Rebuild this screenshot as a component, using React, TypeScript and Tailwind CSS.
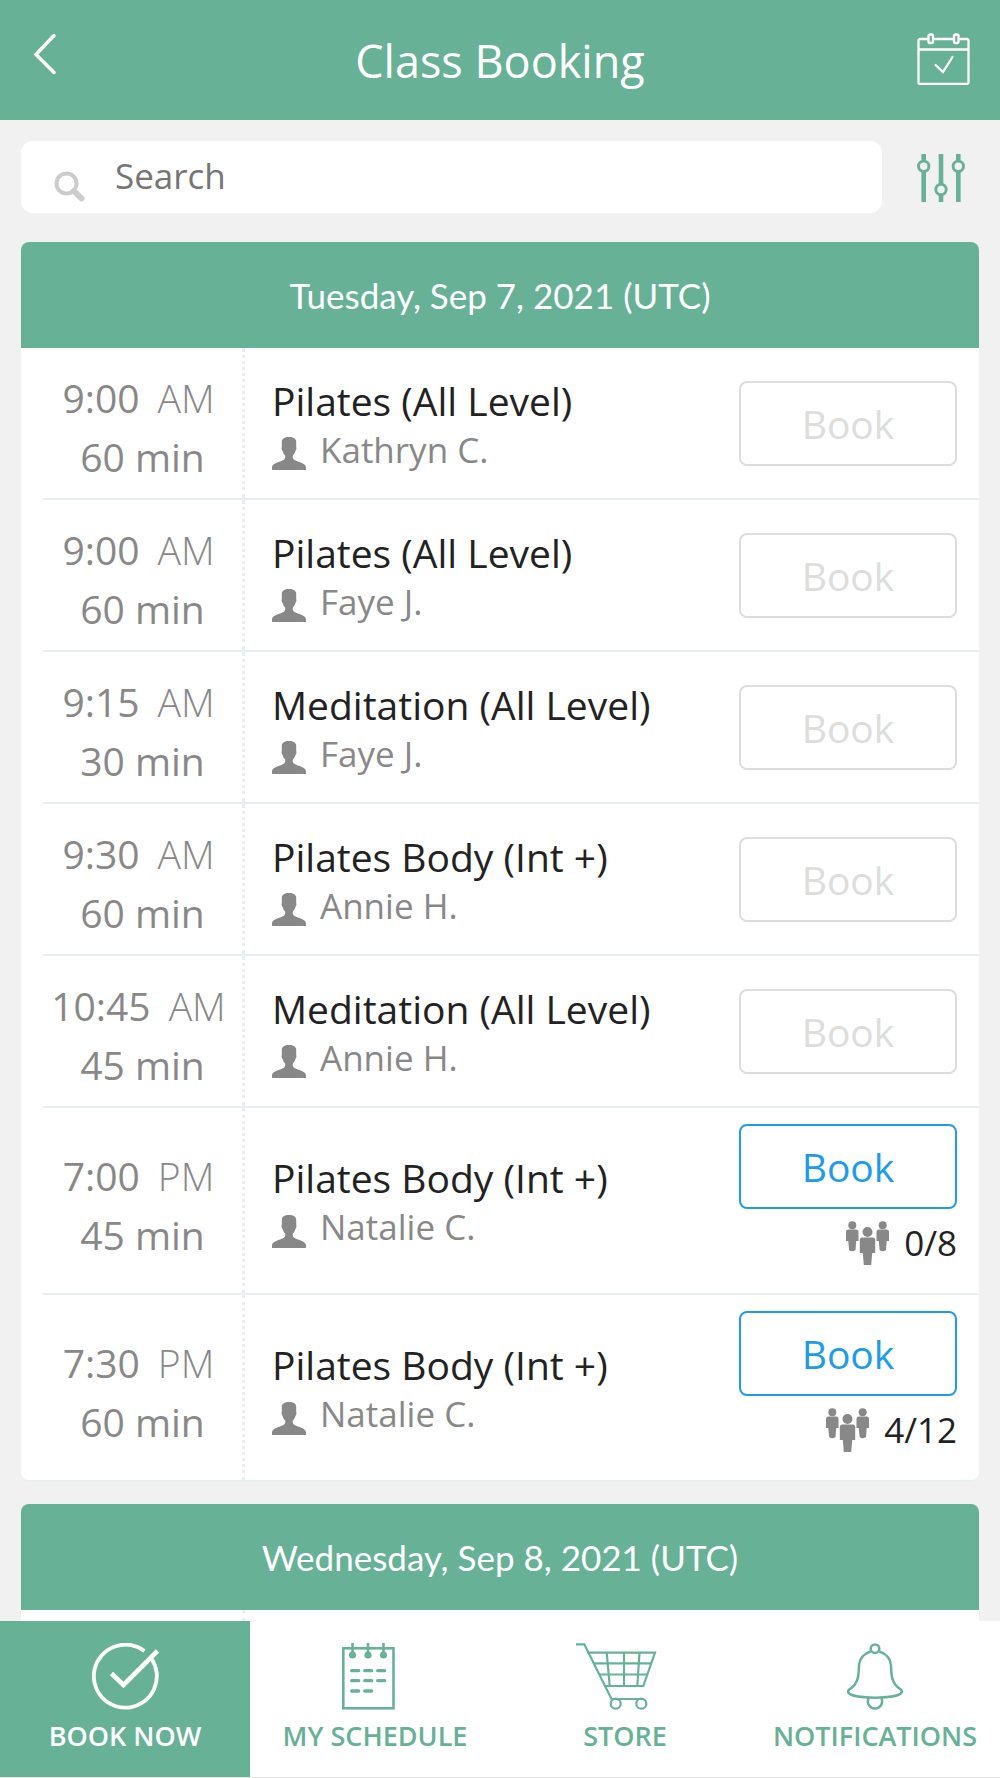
import clsx from "clsx";

type ClassItem = {
  time: string;
  period: string;
  duration: string;
  title: string;
  teacher: string;
  spots?: string;
};

const classes: ClassItem[] = [
  { time: "9:00", period: "AM", duration: "60 min", title: "Pilates (All Level)", teacher: "Kathryn C." },
  { time: "9:00", period: "AM", duration: "60 min", title: "Pilates (All Level)", teacher: "Faye J." },
  { time: "9:15", period: "AM", duration: "30 min", title: "Meditation (All Level)", teacher: "Faye J." },
  { time: "9:30", period: "AM", duration: "60 min", title: "Pilates Body (Int +)", teacher: "Annie H." },
  { time: "10:45", period: "AM", duration: "45 min", title: "Meditation (All Level)", teacher: "Annie H." },
  { time: "7:00", period: "PM", duration: "45 min", title: "Pilates Body (Int +)", teacher: "Natalie C.", spots: "0/8" },
  { time: "7:30", period: "PM", duration: "60 min", title: "Pilates Body (Int +)", teacher: "Natalie C.", spots: "4/12" },
];

const BackIcon = () => (
  <svg width="24" height="42" viewBox="0 0 24 42" fill="none" stroke="currentColor" strokeWidth="3.500" strokeLinecap="round">
    <path d="M21 2.500 3 21.500l18 18" strokeLinejoin="miter" />
  </svg>
);

const CalendarIcon = () => (
  <svg width="53" height="52" viewBox="0 0 53 52" fill="none" stroke="currentColor" strokeWidth="2.300">
    <path d="M11 6H3a1.500 1.500 0 0 0-1.500 1.500V49.500A1.500 1.500 0 0 0 3 51H50a1.500 1.500 0 0 0 1.500-1.500V7.500A1.500 1.500 0 0 0 50 6H42M36.500 6H16.500M1.500 16.500H51.500" />
    <rect x="11.500" y="1.500" width="4.500" height="8.500" rx="1.500" />
    <rect x="37" y="1.500" width="4.500" height="8.500" rx="1.500" />
    <path d="M18.500 32l7.500 7 9.500-15" strokeLinecap="round" />
  </svg>
);

const SearchIcon = () => (
  <svg width="31" height="31" viewBox="0 0 31 31" fill="none" stroke="currentColor">
    <circle cx="12.500" cy="12.500" r="10" strokeWidth="4" />
    <path d="M20 20l7.500 7.500" strokeWidth="6" strokeLinecap="round" />
  </svg>
);

const FilterIcon = () => (
  <svg width="48" height="48" viewBox="0 0 48 48" fill="none" stroke="currentColor" strokeWidth="4.600">
    <path d="M6.700 0v7M6.700 18v30M24 0v30M24 41v7M41.300 0v7M41.300 18v30" />
    <g strokeWidth="2.900">
      <circle cx="6.700" cy="12.300" r="5.200" />
      <circle cx="24" cy="35.500" r="5.200" />
      <circle cx="41.300" cy="12.300" r="5.200" />
    </g>
  </svg>
);

const PersonIcon = () => (
  <svg width="34" height="33" viewBox="0 0 34 33" fill="currentColor">
    <path d="M17 0C12.500 0 9.800 1.800 9.800 5v5c-.6 1.200-.2 3 .8 4 .6 2.200 1.500 3.600 2.700 4.700v1.800c-.6 2.200-2.500 3-5.300 4C3.500 26.200 0 27.300 0 30.500V33H34V30.500C34 27.300 30.500 26.200 26 24.500c-2.800-1-4.700-1.800-5.300-4v-1.800c1.200-1.100 2.100-2.500 2.700-4.700 1-1 1.400-2.800.8-4V5C24.200 1.800 21.500 0 17 0Z" />
  </svg>
);

const GroupIcon = () => (
  <svg width="43" height="44" viewBox="0 0 43 44" fill="currentColor">
    <circle cx="6.300" cy="4.300" r="4" />
    <path d="M0 11q0-2.500 2.500-2.500h7.500q2.500 0 2.500 2.500v9h-2.300l-.7 9q-3.200 2.500-6.400 0l-.8-9H0Z" />
    <circle cx="36.700" cy="4.300" r="4" />
    <path d="M30.500 11q0-2.500 2.500-2.500h7.500q2.500 0 2.500 2.500v9h-2.300l-.7 9q-3.200 2.500-6.400 0l-.8-9h-2.300Z" />
    <circle cx="21.500" cy="11" r="5" />
    <path d="M13.800 19q0-2.500 2.500-2.500h10.400q2.500 0 2.500 2.500v13h-3l-1 12h-7.400l-1-12h-3Z" />
  </svg>
);

const CheckCircleIcon = () => (
  <svg width="67" height="67" viewBox="0 0 67 67" fill="none" stroke="currentColor" strokeWidth="3.800">
    <path d="M52.400 8.100A31.500 31.500 0 1 0 60 16.400" />
    <path d="M19.500 30.500l12 11.500L65.500 8" strokeWidth="4.600" />
  </svg>
);

const ScheduleIcon = () => (
  <svg width="67" height="67" viewBox="0 0 67 67" fill="none" stroke="currentColor" strokeWidth="2.600">
    <rect x="1.300" y="5.300" width="50.200" height="60" />
    <path d="M10.500 0v12M26 0v12M41.500 0v12" />
    <g fill="currentColor" stroke="none">
      <circle cx="10.500" cy="12" r="3.600" />
      <circle cx="26" cy="12" r="3.600" />
      <circle cx="41.500" cy="12" r="3.600" />
    </g>
    <path
      d="M9.700 27.700h7M22.700 27.700h7M35.700 27.700h7M9.700 37.700h7M22.700 37.700h7M35.700 37.700h7M9.700 48h7M22.700 48h7"
      strokeWidth="3.300"
      strokeLinecap="round"
    />
  </svg>
);

const CartIcon = () => (
  <svg width="98" height="67" viewBox="0 0 98 67" fill="none" stroke="currentColor" strokeWidth="2.200">
    <path d="M0 1.300h8.300L35.500 56H66" />
    <path d="M11.500 9.700H79L67.300 43H29.500M18 20.300h57.500M24 31.500h47.500M30.700 9.700L33.700 43M48 9.700V43M63.500 9.700L61.300 43" />
    <circle cx="39.700" cy="60.700" r="5" />
    <circle cx="65.300" cy="60.700" r="5" />
  </svg>
);

const BellIcon = () => (
  <svg width="56" height="67" viewBox="0 0 56 67" fill="none" stroke="currentColor" strokeWidth="2.500">
    <circle cx="28" cy="5.700" r="4.300" />
    <path d="M23.700 8.500C16.500 10.500 12.300 16 12 22.500C11.700 31 11.700 40 3.500 45.500C1.500 46.800.7 48.200 1.500 49.700C3.500 53.300 17 54.700 28 54.700S52.500 53.300 54.500 49.700C55.300 48.200 54.500 46.800 52.500 45.500C44.300 40 44.300 31 44 22.500C43.700 16 39.500 10.500 32.300 8.500" />
    <path d="M21.500 54.700C19.500 60 22.500 65.500 28 65.500S36.500 60 34.500 54.700" />
  </svg>
);

const DayHeader = ({ children }: { children: string }) => (
  <h2 className="flex h-[106px] shrink-0 items-center justify-center rounded-t-lg bg-[#67b197] font-['Lato',sans-serif] text-[35px] text-white">
    {children}
  </h2>
);

const ClassRow = ({ item }: { item: ClassItem }) => (
  <li className="flex min-h-[152px] border-b-2 border-[#e9eff1] last:border-b-0">
    <div className="flex w-[199px] shrink-0 flex-col justify-center pt-2 text-center text-[39px] leading-[59px] text-[#888]">
      <div className="flex justify-center gap-[18px] pr-2">
        <span>{item.time}</span>
        <span className="font-light">{item.period}</span>
      </div>
      <div>{item.duration}</div>
    </div>
    <div className="flex min-w-0 flex-1 flex-col justify-center border-l-3 border-dotted border-[#e9eff1] pt-[2px] pl-[27px]">
      <h3 className="text-[39px] leading-[51px] text-[#222]">{item.title}</h3>
      <div className="flex items-center gap-[14px] text-[35px] leading-[48px] text-[#888]">
        <span className="pt-2">
          <PersonIcon />
        </span>
        {item.teacher}
      </div>
    </div>
    <div className={clsx("flex shrink-0 flex-col pr-[22px]", item.spots ? "pt-4 pb-[26px]" : "justify-center")}>
      <button
        type="button"
        disabled={!item.spots}
        className="h-[85px] w-[218px] rounded-lg border-2 border-[#1f9bea] pt-[2px] text-[39px] text-[#1f9bea] disabled:border-[#ddd] disabled:text-[#ddd]"
      >
        Book
      </button>
      {item.spots && (
        <div className="mt-[10px] flex items-center justify-end gap-[15px] text-[35px] leading-[48px] text-[#222]">
          <span className="text-[#888]">
            <GroupIcon />
          </span>
          {item.spots}
        </div>
      )}
    </div>
  </li>
);

const tabs = [
  { label: "BOOK NOW", icon: <CheckCircleIcon />, active: true },
  { label: "MY SCHEDULE", icon: <ScheduleIcon /> },
  { label: "STORE", icon: <CartIcon /> },
  { label: "NOTIFICATIONS", icon: <BellIcon /> },
];

export default function App() {
  return (
    <div className="flex h-screen flex-col bg-[#f1f1f1] font-['Open_Sans',sans-serif]">
      <header className="flex h-[120px] shrink-0 items-center justify-between bg-[#67b197] px-[30px] text-white">
        <button type="button" aria-label="Back" className="w-[53px] pb-3 pl-[3px]">
          <BackIcon />
        </button>
        <h1 className="pt-[2px] text-[45px]">Class Booking</h1>
        <button type="button" aria-label="My bookings" className="pb-[2px]">
          <CalendarIcon />
        </button>
      </header>

      <main className="flex min-h-0 flex-1 flex-col overflow-y-auto px-[21px] [scrollbar-width:none]">
        <div className="flex shrink-0 items-center pt-[21px] pb-[29px]">
          <label className="flex h-[72px] flex-1 items-center rounded-xl bg-white pl-[33px] text-[#ccc]">
            <span className="pt-[18px]">
              <SearchIcon />
            </span>
            <input
              type="search"
              aria-label="Search"
              placeholder="Search"
              className="ml-[30px] min-w-0 flex-1 pb-px text-[35px] text-[#222] outline-none placeholder:text-[#757575]"
            />
          </label>
          <button type="button" aria-label="Filters" className="mr-[14px] ml-[35px] pt-[2px] text-[#67b197]">
            <FilterIcon />
          </button>
        </div>

        <section className="shrink-0 rounded-lg bg-white shadow-[0_2px_0_#e9eff1]">
          <DayHeader>Tuesday, Sep 7, 2021 (UTC)</DayHeader>
          <ul className="pl-[22px]">
            {classes.map((item, i) => (
              <ClassRow key={i} item={item} />
            ))}
          </ul>
        </section>

        <section className="mt-6 flex flex-1 flex-col">
          <DayHeader>Wednesday, Sep 8, 2021 (UTC)</DayHeader>
          <div className="flex flex-1 bg-white pl-[221px]">
            <div className="border-l-3 border-dotted border-[#e9eff1]" />
          </div>
        </section>
      </main>

      <nav className="grid shrink-0 grid-cols-4 border-b border-[#e5e5e5] bg-white">
        {tabs.map((tab) => (
          <a
            key={tab.label}
            href="#"
            className={clsx(
              "flex h-[156px] flex-col items-center gap-2 pt-[22px] text-[27px] leading-[35px] font-semibold",
              tab.active ? "bg-[#67b197] text-white" : "text-[#67b197]"
            )}
          >
            {tab.icon}
            {tab.label}
          </a>
        ))}
      </nav>
    </div>
  );
}
